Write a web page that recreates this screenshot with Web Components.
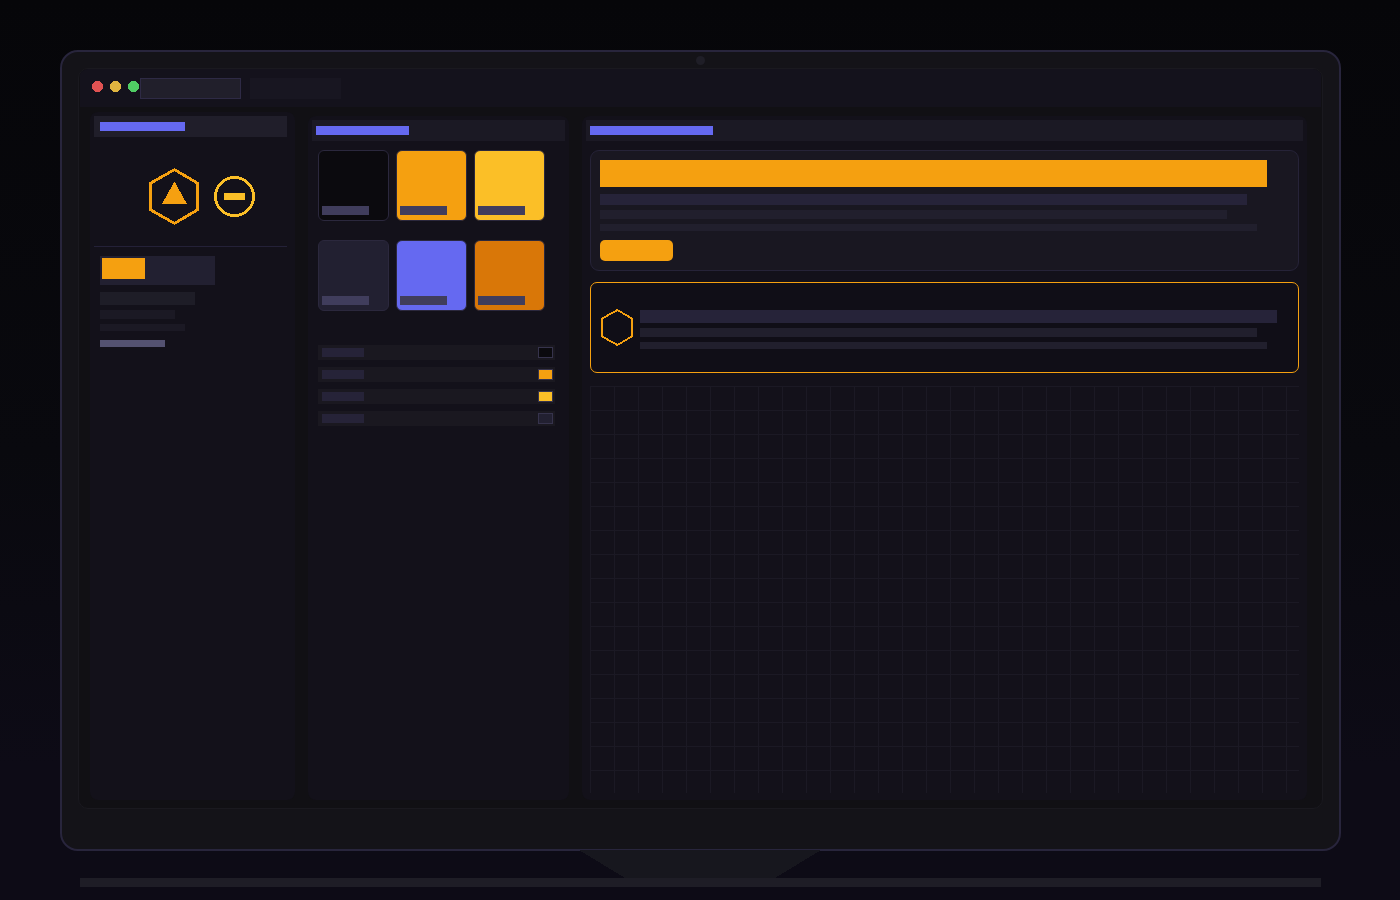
<!DOCTYPE html>
<html lang="en">
<head>
<meta charset="utf-8">
<title>Brand workspace</title>
<style>
  body {
    margin: 0;
    width: 1400px;
    height: 900px;
    overflow: hidden;
    background: linear-gradient(#060609, #09090e 50%, #0d0b16 85%, #0d0b16);
    font-family: "Liberation Sans", sans-serif;
  }
  .columns {
    display: flex;
    align-items: flex-end;
    gap: 13px;
    padding: 5px 0 0 10px;
  }
</style>
</head>
<body>
<desk-monitor>
  <window-bar></window-bar>
  <div class="columns">
    <side-panel style="width:205px;height:688px">
      <panel-head w="85" pad="6" style="--head:#201e2a"></panel-head>
      <brand-marks></brand-marks>
      <brand-summary></brand-summary>
    </side-panel>
    <side-panel style="width:261px;height:684px">
      <panel-head w="93" pad="4"></panel-head>
      <swatch-grid></swatch-grid>
      <token-list></token-list>
    </side-panel>
    <side-panel style="width:725px;height:684px">
      <panel-head w="123" pad="4"></panel-head>
      <preview-stack></preview-stack>
    </side-panel>
  </div>
</desk-monitor>

<script>
// attaches an open shadow root filled from an html string
function mount(el, html) {
  const template = document.createElement("template");
  template.innerHTML = html;
  el.attachShadow({ mode: "open" }).appendChild(template.content.cloneNode(true));
}

class DeskMonitor extends HTMLElement {
  constructor() {
    super();
    mount(this, `
      <style>
        :host { display: flex; flex-direction: column; align-items: center; padding-top: 50px; }
        .frame {
          position: relative;
          box-sizing: border-box;
          width: 1281px;
          height: 801px;
          margin-left: 1px;
          padding: 16px;
          border: 2px solid #28253c;
          border-radius: 18px;
          background: #141318;
        }
        .camera {
          position: absolute;
          left: 634px;
          top: 4px;
          width: 9px;
          height: 9px;
          border-radius: 50%;
          background: #1f1e27;
        }
        .screen {
          box-sizing: border-box;
          width: 1245px;
          height: 741px;
          padding: 0 1px;
          border: 1px solid #1a191f;
          border-radius: 10px;
          background: #111014;
          overflow: hidden;
        }
        .stand {
          position: relative;
          display: block;
          margin-top: -1px;
          shape-rendering: crispEdges;
        }
        .base { width: 1241px; height: 9px; margin-left: 1px; background: #1e1d26; }
      </style>
      <div class="frame">
        <div class="camera"></div>
        <div class="screen"><slot></slot></div>
      </div>
      <svg class="stand" width="242" height="28"><path d="M0 0H242L196 28H46Z" fill="#17171e"/></svg>
      <div class="base"></div>
    `);
  }
}

class WindowBar extends HTMLElement {
  constructor() {
    super();
    mount(this, `
      <style>
        :host { display: flex; align-items: flex-start; height: 38px; background: #14121c; }
        .dots { display: block; flex: none; width: 60px; height: 38px; shape-rendering: crispEdges; }
        .tab { box-sizing: border-box; width: 101px; height: 21px; margin-top: 9px; background: #211f2b; border: 1px solid #2e2a45; }
        .idle { width: 91px; margin-left: 9px; background: #181621; border: 0; }
      </style>
      <svg class="dots" viewBox="0 0 60 38">
        <circle cx="17.5" cy="17.5" r="5.6" fill="#e05252"/>
        <circle cx="35.5" cy="17.5" r="5.6" fill="#e0b440"/>
        <circle cx="53.5" cy="17.5" r="5.6" fill="#50cc64"/>
      </svg>
      <div class="tab"></div>
      <div class="tab idle"></div>
    `);
  }
}

class SidePanel extends HTMLElement {
  constructor() {
    super();
    mount(this, `
      <style>
        :host { display: block; box-sizing: border-box; flex: none; padding: 4px; border-radius: 8px; background: #13111a; }
      </style>
      <slot></slot>
    `);
  }
}

class PanelHead extends HTMLElement {
  constructor() {
    super();
    mount(this, `
      <style>
        :host { display: block; box-sizing: border-box; height: 21px; background: var(--head, #1b1924); }
        div { height: 9px; background: #6569f1; }
      </style>
      <div></div>
    `);
    this.style.padding = "6px " + this.getAttribute("pad") + "px";
    if (this.getAttribute("pad") === "6") this.style.marginRight = "4px";
    this.shadowRoot.querySelector("div").style.width = this.getAttribute("w") + "px";
  }
}

class BrandMarks extends HTMLElement {
  constructor() {
    super();
    mount(this, `
      <style>
        :host { display: block; height: 109px; margin-right: 4px; border-bottom: 1px solid #242138; }
        svg { display: block; shape-rendering: crispEdges; }
      </style>
      <svg width="193" height="109" viewBox="94 137 193 109" fill="none">
        <path d="M174.5 169.6L197.5 183.2V209.8L174.5 223.4L150.5 209.8V183.2Z" stroke="#f5a010" stroke-width="2.8"/>
        <path d="M174.5 181.5L187 204H162Z" fill="#f5a010"/>
        <circle cx="234.5" cy="196.5" r="19.1" stroke="#fbbf27" stroke-width="2.8"/>
        <path d="M224 193h21v7h-21z" fill="#fbbf27"/>
      </svg>
    `);
  }
}

class BrandSummary extends HTMLElement {
  constructor() {
    super();
    mount(this, `
      <style>
        :host { display: block; padding: 9px 6px; }
        .meter { box-sizing: border-box; width: 115px; height: 29px; padding: 2px; background: #222031; }
        .meter div { width: 43px; height: 21px; background: #f5a010; }
        .line { background: #1b1924; }
      </style>
      <div class="meter"><div></div></div>
      <div class="line" style="width:95px;height:13px;margin-top:7px;background:#1e1d27"></div>
      <div class="line" style="width:75px;height:9px;margin-top:5px"></div>
      <div class="line" style="width:85px;height:7px;margin-top:5px"></div>
      <div class="line" style="width:65px;height:7px;margin-top:9px;background:#545271"></div>
    `);
  }
}

class SwatchGrid extends HTMLElement {
  constructor() {
    super();
    const colors = ["#0b0a0e", "#f5a010", "#fbbf27", "#222031", "#6569f1", "#d97708"];
    mount(this, `
      <style>
        :host { display: grid; grid-template-columns: repeat(3, 71px); gap: 19px 7px; padding: 9px 6px 0; }
        .swatch {
          box-sizing: border-box;
          height: 71px;
          padding: 55px 3px 0;
          border: 1px solid #2b283d;
          border-radius: 6px;
        }
        .swatch div { width: 47px; height: 9px; background: #403d5c; }
      </style>
      ${colors.map(c => `<div class="swatch" style="background:${c}"><div></div></div>`).join("")}
    `);
  }
}

class TokenList extends HTMLElement {
  constructor() {
    super();
    const colors = ["#0b0a0e", "#f5a010", "#fbbf27", "#222031"];
    mount(this, `
      <style>
        :host { display: flex; flex-direction: column; gap: 7px; padding: 34px 6px 0; }
        .row {
          display: flex;
          justify-content: space-between;
          align-items: flex-start;
          box-sizing: border-box;
          width: 237px;
          height: 15px;
          padding: 2px 2px 0 4px;
          background: #1a1820;
        }
        .name { width: 42px; height: 9px; margin-top: 1px; background: #262338; }
        .chip { box-sizing: border-box; width: 15px; height: 11px; border: 1px solid #36334c; }
      </style>
      ${colors.map(c => `<div class="row"><div class="name"></div><div class="chip" style="background:${c}"></div></div>`).join("")}
    `);
  }
}

class PreviewStack extends HTMLElement {
  constructor() {
    super();
    mount(this, `
      <style>
        :host { display: block; padding: 9px 4px 0; }
        .card { box-sizing: border-box; height: 121px; padding: 9px; border: 1px solid #262338; border-radius: 9px; background: #191721; }
        .hero { width: 667px; height: 27px; background: #f5a010; }
        .line { background: #211f2d; }
        .strong { background: #262339; }
        .button { width: 73px; height: 21px; margin-top: 9px; border-radius: 5px; background: #f5a010; }
        .notice {
          display: flex;
          box-sizing: border-box;
          height: 91px;
          margin-top: 11px;
          padding: 26px 9px 0;
          border: 1px solid #f5a010;
          border-radius: 7px;
          background: #100e17;
        }
        svg { display: block; flex: none; width: 40px; height: 38px; shape-rendering: crispEdges; }
        .canvas {
          height: 407px;
          margin-top: 13px;
          background:
            linear-gradient(90deg, #1b1924 1px, transparent 1px) 0 0 / 24px 24px,
            linear-gradient(#1b1924 1px, transparent 1px) 0 0 / 24px 24px;
        }
      </style>
      <div class="card">
        <div class="hero"></div>
        <div class="line strong" style="width:647px;height:11px;margin-top:7px"></div>
        <div class="line" style="width:627px;height:9px;margin-top:5px"></div>
        <div class="line" style="width:657px;height:7px;margin-top:5px"></div>
        <div class="button"></div>
      </div>
      <div class="notice">
        <svg viewBox="600 309 40 38"><path d="M617.4 310L632 318.6V336.4L617.4 345L602 336.4V318.6Z" fill="none" stroke="#f5a010" stroke-width="1.8"/></svg>
        <div>
          <div class="line strong" style="width:637px;height:13px;margin-top:1px"></div>
          <div class="line" style="width:617px;height:9px;margin-top:5px"></div>
          <div class="line" style="width:627px;height:7px;margin-top:5px"></div>
        </div>
      </div>
      <div class="canvas"></div>
    `);
  }
}

customElements.define("desk-monitor", DeskMonitor);
customElements.define("window-bar", WindowBar);
customElements.define("side-panel", SidePanel);
customElements.define("panel-head", PanelHead);
customElements.define("brand-marks", BrandMarks);
customElements.define("brand-summary", BrandSummary);
customElements.define("swatch-grid", SwatchGrid);
customElements.define("token-list", TokenList);
customElements.define("preview-stack", PreviewStack);
</script>
</body>
</html>
